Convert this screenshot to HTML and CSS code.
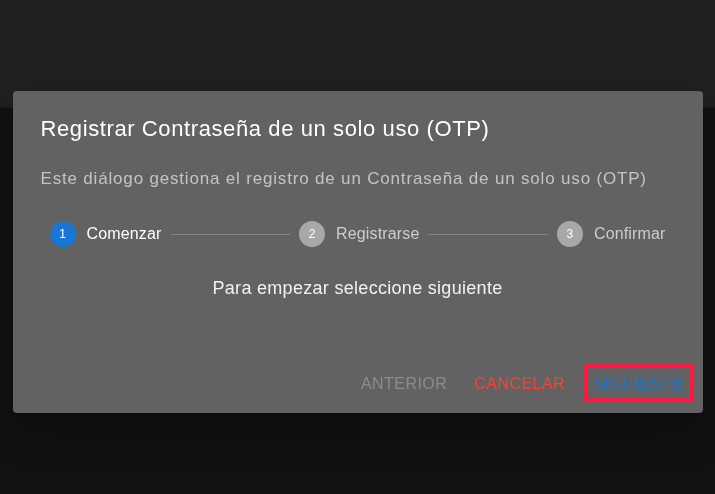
FILE: index.html
```html
<!DOCTYPE html>
<html lang="es">
<head>
<meta charset="utf-8">
<title>Registrar OTP</title>
<link rel="stylesheet" href="styles.css">
</head>
<body>
<div class="page">
  <header class="appbar"></header>
  <main class="content"></main>
</div>
<div class="overlay">
  <div class="dialog" role="dialog">
    <h2 class="title">Registrar Contraseña de un solo uso (OTP)</h2>
    <p class="subtitle">Este diálogo gestiona el registro de un Contraseña de un solo uso (OTP)</p>
    <div class="stepper">
      <div class="step active">
        <span class="step-icon">1</span>
        <span class="step-label">Comenzar</span>
      </div>
      <div class="connector"></div>
      <div class="step">
        <span class="step-icon">2</span>
        <span class="step-label">Registrarse</span>
      </div>
      <div class="connector"></div>
      <div class="step">
        <span class="step-icon">3</span>
        <span class="step-label">Confirmar</span>
      </div>
    </div>
    <p class="message">Para empezar seleccione siguiente</p>
    <div class="actions">
      <button class="btn btn-disabled" disabled>Anterior</button>
      <button class="btn btn-cancel">Cancelar</button>
      <button class="btn btn-next">Siguiente</button>
    </div>
  </div>
</div>
</body>
</html>
```

FILE: styles.css
```css
* { box-sizing: border-box; }
html, body {
  margin: 0;
  padding: 0;
  width: 100%;
  height: 100%;
  background: #121212;
  font-family: "Liberation Sans", Arial, sans-serif;
  overflow: hidden;
}
.page {
  display: flex;
  flex-direction: column;
  height: 100%;
}
.appbar {
  height: 108px;
  background: #212121;
  border-bottom: 1px solid #1a1a1a;
}
.content {
  flex: 1;
  background: #121212;
}
.overlay {
  position: fixed;
  inset: 0;
  display: flex;
  justify-content: center;
  align-items: flex-start;
  padding-top: 91px;
}
.dialog {
  width: 690px;
  height: 322px;
  background: #626262;
  border-radius: 4px;
  box-shadow: 0 11px 15px -7px rgba(0,0,0,0.2), 0 24px 38px 3px rgba(0,0,0,0.14), 0 9px 46px 8px rgba(0,0,0,0.12);
  padding: 22px 9px 11px 28px;
  display: flex;
  flex-direction: column;
  color: #fff;
}
.title {
  margin: 0;
  font-size: 22px;
  line-height: 32px;
  font-weight: 400;
  letter-spacing: 0.6px;
  color: #ffffff;
}
.subtitle {
  margin: 22px 0 0;
  font-size: 17px;
  line-height: 24px;
  letter-spacing: 0.82px;
  color: #c4c4c4;
}
.stepper {
  margin: 30px 28px 0 9px;
  display: flex;
  align-items: center;
  height: 26px;
}
.step {
  display: flex;
  align-items: center;
}
.step-icon {
  width: 26px;
  height: 26px;
  border-radius: 50%;
  background: #a8a8a8;
  color: #fff;
  font-size: 12px;
  display: flex;
  align-items: center;
  justify-content: center;
  margin-right: 11px;
}
.step.active .step-icon { background: #1976d2; }
.step-label {
  font-size: 16px;
  line-height: 24px;
  letter-spacing: 0.15px;
  color: #cdcdcd;
}
.step.active .step-label { color: #ffffff; }
.connector {
  flex: 1;
  height: 1px;
  background: #848484;
  margin: 0 9px;
}
.message {
  margin: 28px 19px 0 0;
  text-align: center;
  font-size: 18px;
  line-height: 27px;
  letter-spacing: 0.3px;
  color: #f2f2f2;
}
.actions {
  margin-top: auto;
  display: flex;
  justify-content: flex-end;
  gap: 9px;
}
.btn {
  font-family: "Liberation Sans", Arial, sans-serif;
  font-size: 16px;
  letter-spacing: 0.46px;
  text-transform: uppercase;
  background: none;
  border: 4px solid transparent;
  border-radius: 2px;
  height: 39px;
  padding: 2px 6px 0;
  line-height: 29px;
  cursor: pointer;
}
.btn-disabled { color: #8c8c8c; cursor: default; }
.btn-cancel { color: #f44336; margin-left: -2px; }
.btn-next {
  color: #1976d2;
  border-color: #ff1744;
  padding-left: 5px;
}
```
